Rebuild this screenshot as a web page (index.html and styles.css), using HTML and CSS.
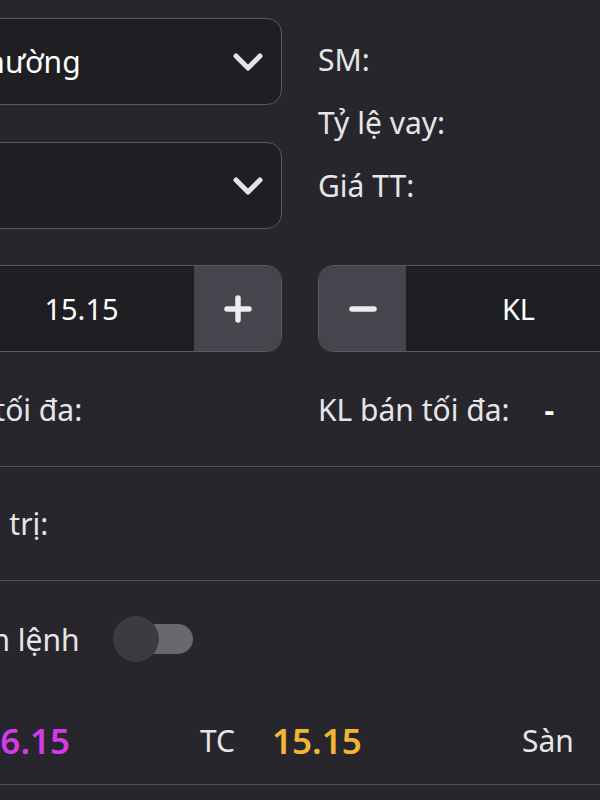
FILE: index.html
```html
<!DOCTYPE html>
<html lang="vi">
<head>
    <meta charset="UTF-8">
    <meta name="viewport" content="width=device-width, initial-scale=1.0">
    <title>Đặt lệnh</title>
    <link rel="stylesheet" href="styles.css">
</head>
<body>
    <div class="page">

        <!-- Order type + account info -->
        <div class="two-col top">
            <div class="selects">
                <div class="select">
                    <span>Lệnh thường</span>
                    <svg class="chevron" width="30" height="18" viewBox="0 0 30 18"><polyline points="3,3 15,15 27,3" /></svg>
                </div>
                <div class="select">
                    <span></span>
                    <svg class="chevron" width="30" height="18" viewBox="0 0 30 18"><polyline points="3,3 15,15 27,3" /></svg>
                </div>
            </div>
            <div class="info">
                <div class="info-row">SM:</div>
                <div class="info-row">Tỷ lệ vay:</div>
                <div class="info-row">Giá TT:</div>
            </div>
        </div>

        <!-- Price / volume steppers -->
        <div class="two-col steppers">
            <div class="stepper">
                <div class="step-btn">
                    <svg width="28" height="28" viewBox="0 0 28 28"><line x1="3" y1="14" x2="25" y2="14" /></svg>
                </div>
                <div class="step-value">15.15</div>
                <div class="step-btn">
                    <svg width="28" height="28" viewBox="0 0 28 28"><line x1="3" y1="14" x2="25" y2="14" /><line x1="14" y1="3" x2="14" y2="25" /></svg>
                </div>
            </div>
            <div class="stepper">
                <div class="step-btn">
                    <svg width="28" height="28" viewBox="0 0 28 28"><line x1="3" y1="14" x2="25" y2="14" /></svg>
                </div>
                <div class="step-value">KL</div>
                <div class="step-btn">
                    <svg width="28" height="28" viewBox="0 0 28 28"><line x1="3" y1="14" x2="25" y2="14" /><line x1="14" y1="3" x2="14" y2="25" /></svg>
                </div>
            </div>
        </div>

        <div class="two-col max-row">
            <div class="label">KL mua tối đa:</div>
            <div class="label">KL bán tối đa: <span class="dash">-</span></div>
        </div>

        <div class="section total-row">Tổng giá trị:</div>

        <div class="section confirm-row">
            <span>Xác nhận lệnh</span>
            <span class="toggle"><span class="toggle-thumb"></span></span>
        </div>

        <div class="price-row">
            <div class="price"><span>Trần</span><b class="ceil">16.15</b></div>
            <div class="price"><span>TC</span><b class="ref">15.15</b></div>
            <div class="price"><span>Sàn</span><b class="floor">14.10</b></div>
        </div>

    </div>
</body>
</html>
```

FILE: styles.css
```css
body {
    margin: 0;
    background-color: #27262c;
    color: #e6e6e8;
    font-family: "Noto Sans", sans-serif;
    font-size: 30px;
    overflow: hidden;
}
.page {
    width: 838px;
    margin-left: -119px;
    padding-top: 18px;
}
.two-col {
    display: grid;
    grid-template-columns: 401px 401px;
    column-gap: 36px;
}
/* Selects */
.selects {
    display: flex;
    flex-direction: column;
    gap: 37px;
}
.select {
    height: 87px;
    box-sizing: border-box;
    border: 1px solid #5b5a61;
    border-radius: 15px;
    background-color: #1f1e23;
    display: flex;
    align-items: center;
    justify-content: space-between;
    padding: 0 18px 0 16px;
    color: #fff;
}
.chevron polyline {
    fill: none;
    stroke: #e4e4e6;
    stroke-width: 5;
    stroke-linecap: round;
    stroke-linejoin: round;
}
.info {
    margin-top: 10px;
}
.info-row {
    height: 63px;
    line-height: 63px;
}
/* Steppers */
.steppers {
    margin-top: 36px;
}
.stepper {
    display: flex;
    height: 87px;
    box-sizing: border-box;
    border: 1px solid #5b5a61;
    border-radius: 15px;
    overflow: hidden;
    background-color: #1f1e23;
}
.step-btn {
    width: 87px;
    background-color: #46444c;
    display: flex;
    align-items: center;
    justify-content: center;
}
.step-btn line {
    stroke: #ececee;
    stroke-width: 5.5;
    stroke-linecap: round;
}
.step-value {
    flex: 1;
    display: flex;
    align-items: center;
    justify-content: center;
    color: #fff;
    font-size: 29px;
}
/* Max volume */
.max-row {
    margin-top: 28px;
    height: 60px;
    line-height: 60px;
    margin-bottom: 26px;
}
.dash {
    margin-left: 27px;
    color: #fff;
    font-weight: bold;
}
.section {
    border-top: 1px solid #4e4d54;
}
.total-row {
    height: 113px;
    line-height: 113px;
}
.confirm-row {
    height: 116px;
    display: flex;
    align-items: center;
    gap: 36px;
}
.toggle {
    position: relative;
    width: 58px;
    height: 30px;
    border-radius: 15px;
    background-color: #69686e;
    margin-left: 19px;
}
.toggle-thumb {
    position: absolute;
    left: -22px;
    top: -8px;
    width: 46px;
    height: 46px;
    border-radius: 50%;
    background-color: #3c3b41;
}
/* Price references */
.price-row {
    height: 87px;
    display: grid;
    grid-template-columns: 319px 322px auto;
    align-items: center;
    border-bottom: 1px solid #4e4d54;
}
.price {
    display: flex;
    align-items: center;
    gap: 37px;
}
.price b {
    font-size: 35px;
    font-weight: 600;
}
.ceil {
    color: #d33be8;
}
.ref {
    color: #f2b632;
}
.floor {
    color: #2fc6e8;
}
```
